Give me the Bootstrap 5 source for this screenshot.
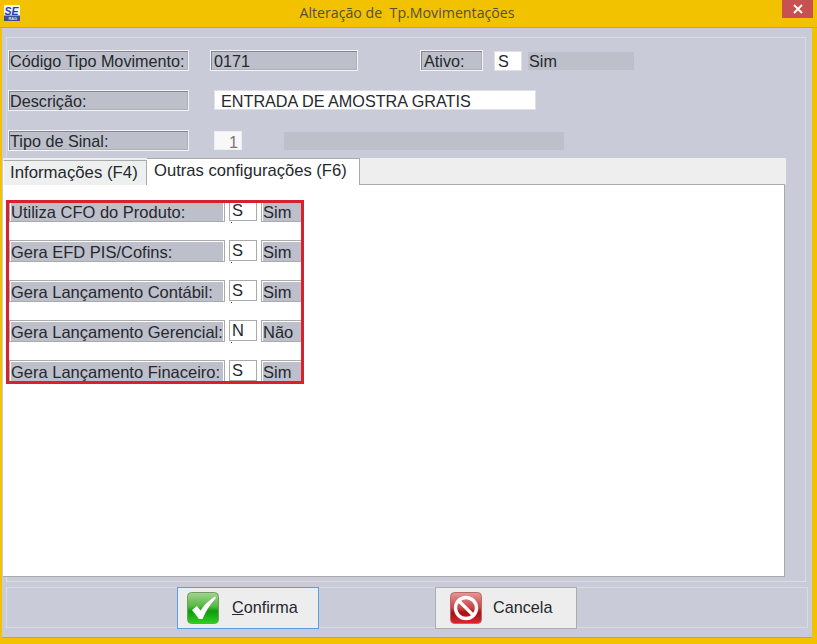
<!DOCTYPE html>
<html lang="pt">
<head>
<meta charset="utf-8">
<title>Alteração de Tp.Movimentações</title>
<link href="https://cdn.jsdelivr.net/npm/bootstrap@5.3.0/dist/css/bootstrap.min.css" rel="stylesheet">
<style>
html,body{margin:0;padding:0;background:#f2c200;}
body{width:817px;height:644px;overflow:hidden;font-family:"Liberation Sans",Arial,sans-serif;font-size:16.2px;line-height:1;color:#26282e;}
.title-bar{height:28px;border-bottom:1px solid #c8a62a;position:relative;}
.app-logo{margin:5px 0 0 4px;display:block;}
.win-title{flex:1;text-align:center;font-family:"Open Sans",sans-serif;font-size:14.2px;line-height:1;color:#54503c;padding:6px 0 0 12px;}
.win-close{width:31px;height:18px;background:#c75050;margin-right:4px;}
.client{margin-left:2px;width:810px;height:610px;background:#c9ccd8;padding:9px 0 0 4px;border-bottom:1px solid #c8a62a;}
.group-box{width:800px;height:545px;border:1px solid #dadce4;padding-top:12px;}
.form-line{height:21px;margin-bottom:19px;}
.form-line.last-line{margin-bottom:7px;}
.etched{background:#bdc0ca;border:1px solid #f3f4f7;box-shadow:inset 1px 1px 0 #85868c,inset -1px -1px 0 #aeb0b8;height:21px;padding:2px 0 0 1px;white-space:nowrap;}
.etched-main{width:181px;margin-left:1px;}
.etched-code{width:148px;margin-left:21px;padding-left:3px;}
.etched-active{width:63px;margin-left:62px;padding-left:3px;}
.white-field{background:#fff;border:1px solid #dfe0e6;height:20px;padding:1px 0 0 3px;white-space:nowrap;}
.field-s{width:28px;margin-left:11px;margin-top:1px;}
.flat-sim{width:106px;height:18px;margin:2px 0 0 6px;background:#bdc0ca;padding:1px 0 0 1px;}
.field-desc{width:322px;margin-left:25px;padding:2px 0 0 6px;}
.field-sign{width:28px;margin:1px 0 0 25px;height:19px;text-align:right;color:#777;background:#f8f8f9;border-color:#eceef2;padding:2px 3px 0 0;}
.flat-sign{width:280px;height:18px;margin:2px 0 0 42px;background:#bdc0ca;}
.tab-strip{margin-left:-4px;width:783px;height:27px;background:#eeeeee;}
.tab-off{width:144px;height:25px;margin-top:2px;background:#eef0f0;border-right:1px solid #aaa;border-left:1px solid #fff;border-top:1px solid #aaa;padding:4px 0 0 6px;font-size:16.8px;white-space:nowrap;}
.tab-on{width:213px;height:27px;background:#fff;border-top:1px solid #aaa;border-right:1px solid #aaa;padding:4px 0 0 7px;position:relative;z-index:1;font-size:16.6px;white-space:nowrap;}
.tab-body{margin-left:-4px;width:782px;height:393px;background:#fff;border:solid #aaa;border-width:1px 1px 1px 0;padding:15px 0 0 3px;margin-top:-1px;}
.red-frame{width:298px;height:184px;border:3px solid #d9212e;overflow:hidden;font-size:16.5px;}
.opt-stack{margin-top:-3px;}
.opt-line{height:40px;}
.opt-label{width:216px;height:22px;border:1px solid #aaa;padding:1px;flex:none;}
.opt-label span{display:block;height:19px;background:#bdc0ca;padding:2px 0 0 0;white-space:nowrap;}
.opt-val{width:28px;height:21px;margin-left:4px;border:1px solid #aaa;background:#fff;padding:1px 0 0 2px;position:relative;flex:none;}
.opt-val::after{content:"";position:absolute;left:1px;bottom:-3px;width:1px;height:1px;background:#333;}
.opt-text{width:44px;height:22px;margin-left:4px;border:1px solid #aaa;border-right:0;padding:1px 0 0 1px;flex:none;}
.opt-text span{display:block;height:19px;background:#bdc0ca;padding:2px 0 0 0;}
.foot-box{width:802px;height:41px;margin:5px 0 0 0;border:1px solid #dadce4;}
.win-btn{width:142px;height:42px;margin-top:-1px;padding:0;border-radius:0;background:#ededed;border:1px solid #adadad;color:#26282e;font-size:16.2px;line-height:1;text-align:left;}
.win-btn:hover{background:#ededed;border-color:#adadad;color:#26282e;}
.win-btn span{padding-bottom:2px;}
.btn-ok{margin-left:170px;border-color:#5a9fe0;}
.btn-no{margin-left:116px;}
.btn-ok svg{margin:0 13px 0 9px;}
.btn-no svg{margin:0 11px 0 14px;}
</style>
</head>
<body>
<div class="title-bar d-flex">
  <svg class="app-logo" width="16" height="16" viewBox="0 0 16 16">
    <rect width="16" height="16" rx="1" fill="#f4f6fb"/>
    <rect y="10.5" width="16" height="5.5" fill="#3c4f96"/>
    <text x="0.5" y="9.5" font-family="Liberation Sans" font-weight="700" font-style="italic" font-size="10.5" fill="#1f3fb0">SE</text>
    <text x="4.5" y="15" font-family="Liberation Sans" font-weight="700" font-size="3.8" fill="#dfe4f5">RAG</text>
  </svg>
  <div class="win-title">Alteração de&nbsp; Tp.Movimentações</div>
  <div class="win-close d-flex align-items-center justify-content-center">
    <svg width="10" height="10" viewBox="0 0 10 10"><path d="M1 1 9 9M9 1 1 9" stroke="#fff" stroke-width="1.8"/></svg>
  </div>
</div>
<div class="client">
  <div class="group-box">
    <div class="form-line d-flex">
      <div class="etched etched-main">Código Tipo Movimento:</div>
      <div class="etched etched-code">0171</div>
      <div class="etched etched-active">Ativo:</div>
      <div class="white-field field-s">S</div>
      <div class="flat-sim">Sim</div>
    </div>
    <div class="form-line d-flex">
      <div class="etched etched-main">Descrição:</div>
      <div class="white-field field-desc">ENTRADA DE AMOSTRA GRATIS</div>
    </div>
    <div class="form-line last-line d-flex">
      <div class="etched etched-main">Tipo de Sinal:</div>
      <div class="white-field field-sign">1</div>
      <div class="flat-sign"></div>
    </div>
    <div class="tab-strip d-flex">
      <div class="tab-off">Informações (F4)</div>
      <div class="tab-on">Outras configurações (F6)</div>
    </div>
    <div class="tab-body">
      <div class="red-frame">
        <div class="opt-stack">
          <div class="opt-line d-flex"><div class="opt-label"><span>Utiliza CFO do Produto:</span></div><div class="opt-val">S</div><div class="opt-text"><span>Sim</span></div></div>
          <div class="opt-line d-flex"><div class="opt-label"><span>Gera EFD PIS/Cofins:</span></div><div class="opt-val">S</div><div class="opt-text"><span>Sim</span></div></div>
          <div class="opt-line d-flex"><div class="opt-label"><span>Gera Lançamento Contábil:</span></div><div class="opt-val">S</div><div class="opt-text"><span>Sim</span></div></div>
          <div class="opt-line d-flex"><div class="opt-label"><span>Gera Lançamento Gerencial:</span></div><div class="opt-val">N</div><div class="opt-text"><span>Não</span></div></div>
          <div class="opt-line d-flex"><div class="opt-label"><span>Gera Lançamento Finaceiro:</span></div><div class="opt-val">S</div><div class="opt-text"><span>Sim</span></div></div>
        </div>
      </div>
    </div>
  </div>
  <div class="foot-box d-flex">
    <button type="button" class="btn win-btn btn-ok d-flex align-items-center">
      <svg width="32" height="32" viewBox="0 0 32 32">
        <defs><linearGradient id="gOk" x1="0" y1="0" x2="0" y2="1"><stop offset="0" stop-color="#a6d394"/><stop offset=".45" stop-color="#55b843"/><stop offset=".6" stop-color="#0d9a0d"/><stop offset="1" stop-color="#2fd01f"/></linearGradient></defs>
        <rect x=".5" y=".5" width="31" height="31" rx="4" fill="url(#gOk)" stroke="#6f9e63"/>
        <path d="M5 18 10 14 13.5 18.5Q19 10 28 4.500L29 6Q20.500 15 15.500 27H12Z" fill="#fff"/>
      </svg>
      <span><u>C</u>onfirma</span>
    </button>
    <button type="button" class="btn win-btn btn-no d-flex align-items-center">
      <svg width="32" height="32" viewBox="0 0 32 32">
        <defs><linearGradient id="gNo" x1="0" y1="0" x2="0" y2="1"><stop offset="0" stop-color="#e69898"/><stop offset=".5" stop-color="#c94444"/><stop offset=".65" stop-color="#a80f14"/><stop offset="1" stop-color="#e0262a"/></linearGradient></defs>
        <rect x=".5" y=".5" width="31" height="31" rx="4" fill="url(#gNo)" stroke="#b86a6a"/>
        <circle cx="16" cy="16" r="10.5" fill="none" stroke="#fff" stroke-width="3.4"/>
        <path d="M8.600 8.600 23.400 23.400" stroke="#fff" stroke-width="3.4"/>
      </svg>
      <span>Cancela</span>
    </button>
  </div>
</div>
<script src="https://cdn.jsdelivr.net/npm/bootstrap@5.3.0/dist/js/bootstrap.bundle.min.js"></script>
</body>
</html>
